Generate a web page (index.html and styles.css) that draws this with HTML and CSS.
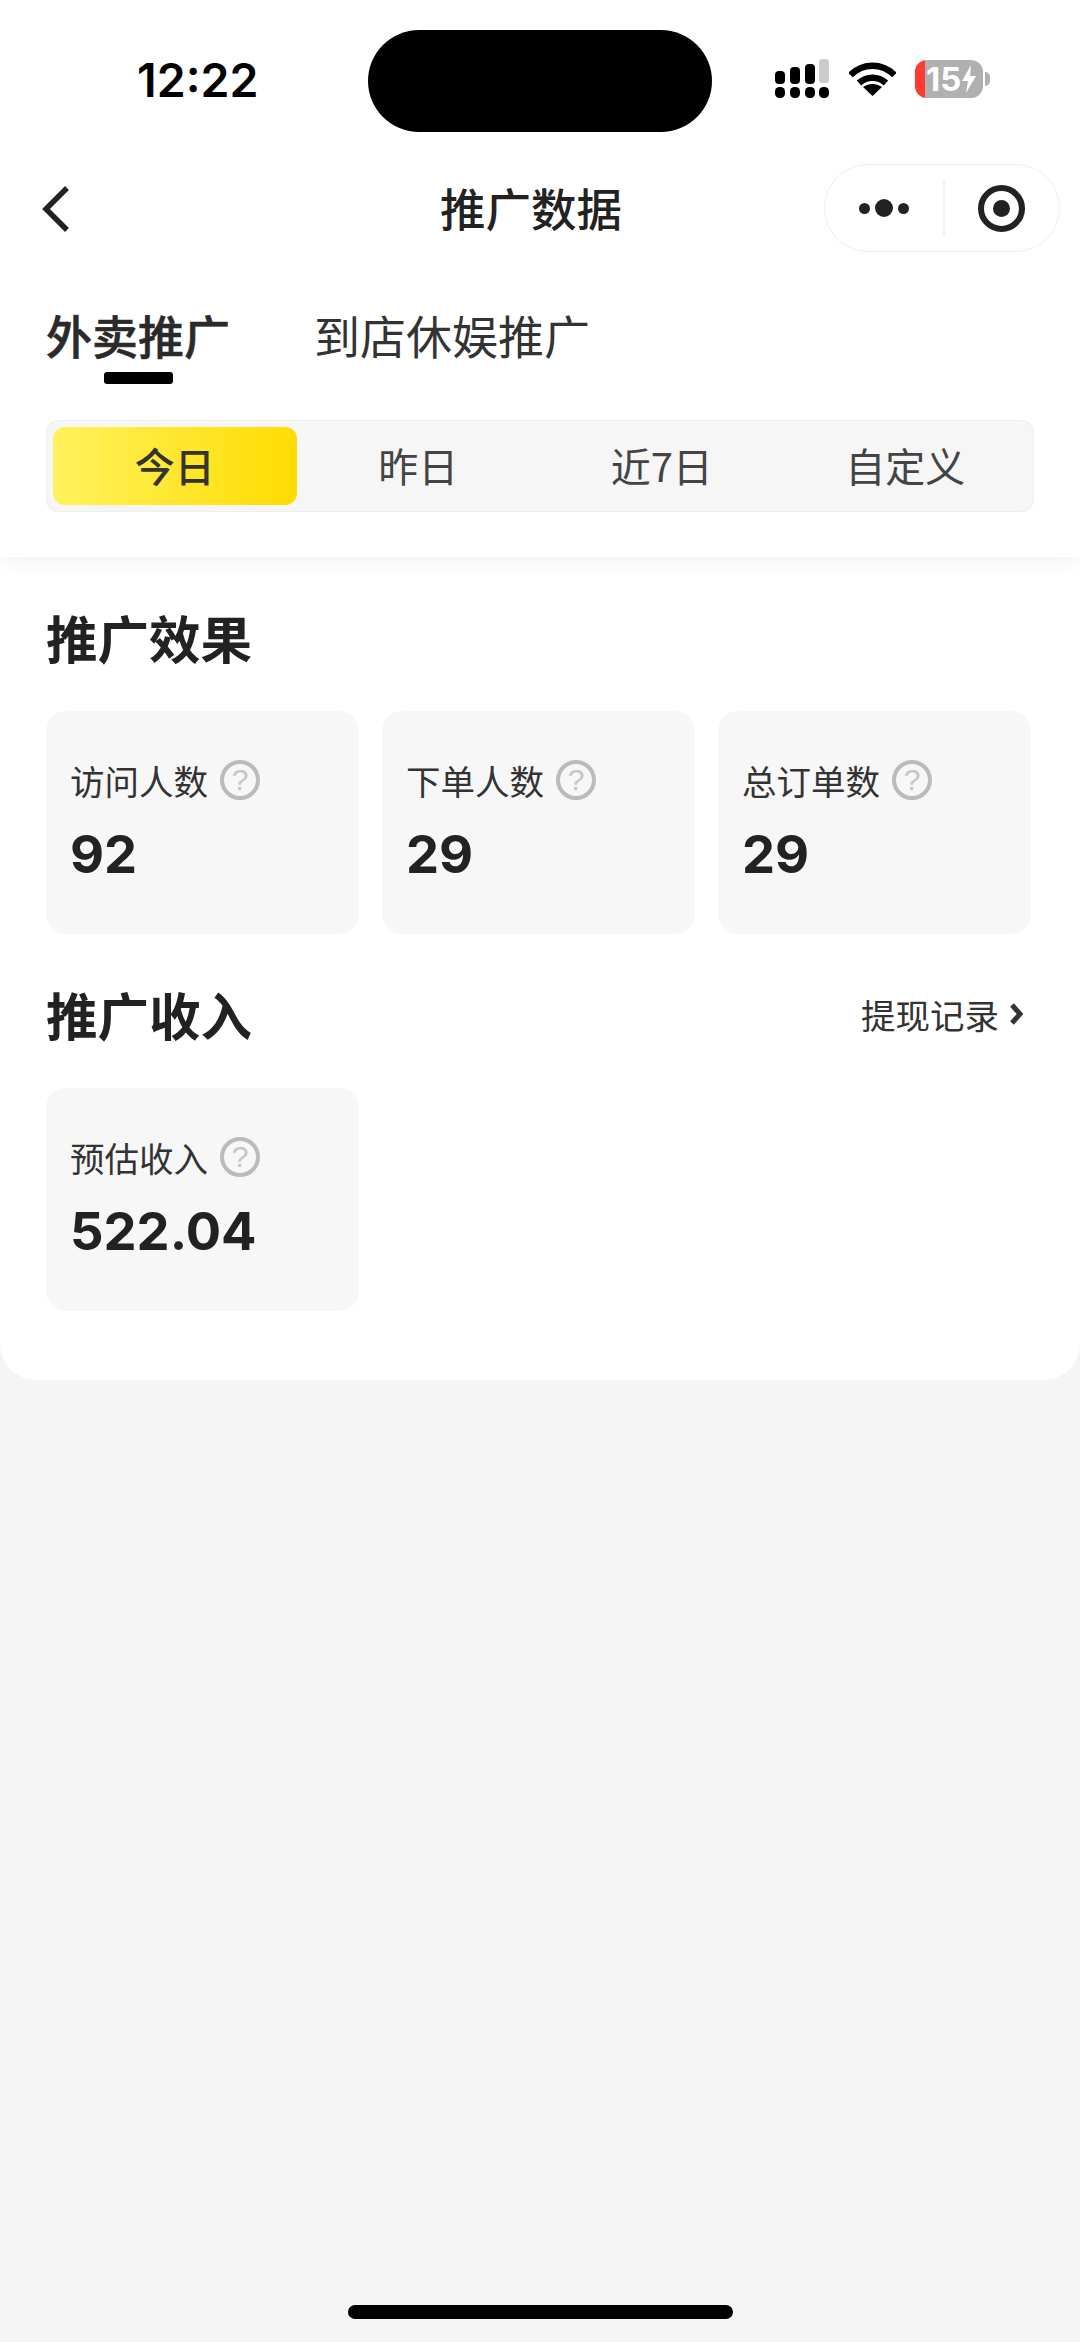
FILE: index.html
```html
<!DOCTYPE html>
<html lang="zh-CN">
<head>
    <meta charset="UTF-8">
    <meta name="viewport" content="width=device-width, initial-scale=1.0">
    <title>推广数据</title>
    <link rel="stylesheet" href="styles.css">
</head>
<body>

<div class="page">
    <div class="header">
        <!-- Status bar -->
        <div class="status-bar">
            <div class="time">12:22</div>
            <div class="island"></div>
            <div class="status-icons">
                <svg class="signal" width="54" height="40" viewBox="0 0 54 40">
                    <rect x="0" y="12" width="10" height="13" rx="4" fill="#000"/>
                    <rect x="15" y="8" width="10" height="17" rx="4" fill="#000"/>
                    <rect x="30" y="5" width="10" height="20" rx="4" fill="#000"/>
                    <rect x="44" y="0" width="10" height="24" rx="3" fill="#ccc"/>
                    <rect x="0" y="28" width="10" height="11" rx="4.5" fill="#000"/>
                    <rect x="15" y="28" width="10" height="11" rx="4.5" fill="#000"/>
                    <rect x="30" y="28" width="10" height="11" rx="4.5" fill="#000"/>
                    <rect x="44" y="28" width="10" height="11" rx="4.5" fill="#000"/>
                </svg>
                <svg class="wifi" width="47" height="36" viewBox="0 0 47 36">
                    <path d="M1.5 14 C14 1.500 33 1.500 45.500 14" fill="none" stroke="#000" stroke-width="6.5"/>
                    <path d="M10 22 C18 15 29 15 37 22" fill="none" stroke="#000" stroke-width="6.5"/>
                    <path d="M23.500 35 L14 26 C20 22 27 22 33 26 Z" fill="#000"/>
                </svg>
                <div class="battery">
                    <div class="battery-body">
                        <span class="battery-red"></span>
                        <span class="battery-num">15</span>
                        <svg width="14" height="28" viewBox="0 0 14 28">
                            <path d="M9 0 L0 16 H6 L4 28 L14 11 H8 Z" fill="#fff"/>
                        </svg>
                    </div>
                    <span class="battery-nub"></span>
                </div>
            </div>
        </div>

        <!-- Nav bar -->
        <div class="nav">
            <svg class="back" width="28" height="48" viewBox="0 0 28 48">
                <path d="M25 3 L4 24 L25 45" fill="none" stroke="#222" stroke-width="5.5"/>
            </svg>
            <div class="nav-title">推广数据</div>
            <div class="capsule">
                <div class="capsule-btn">
                    <span class="dot"></span>
                    <span class="dot dot-big"></span>
                    <span class="dot"></span>
                </div>
                <div class="capsule-btn capsule-right">
                    <span class="target"></span>
                </div>
            </div>
        </div>

        <!-- Tabs -->
        <div class="tabs">
            <div class="tab tab-active">外卖推广</div>
            <div class="tab">到店休娱推广</div>
        </div>

        <div class="ranges">
            <div class="range range-active">今日</div>
            <div class="range">昨日</div>
            <div class="range">近7日</div>
            <div class="range">自定义</div>
        </div>
    </div>

    <div class="content">
        <div class="section-head">
            <div class="section-title">推广效果</div>
        </div>
        <div class="cards">
            <div class="card">
                <div class="card-label">访问人数<span class="help">?</span></div>
                <div class="card-value">92</div>
            </div>
            <div class="card">
                <div class="card-label">下单人数<span class="help">?</span></div>
                <div class="card-value">29</div>
            </div>
            <div class="card">
                <div class="card-label">总订单数<span class="help">?</span></div>
                <div class="card-value">29</div>
            </div>
        </div>

        <div class="section-head">
            <div class="section-title">推广收入</div>
            <div class="section-link">提现记录
                <svg width="15" height="24" viewBox="0 0 15 24">
                    <path d="M3 3 L11 12 L3 21" fill="none" stroke="#333" stroke-width="5"/>
                </svg>
            </div>
        </div>
        <div class="cards">
            <div class="card">
                <div class="card-label">预估收入<span class="help">?</span></div>
                <div class="card-value">522.04</div>
            </div>
        </div>
    </div>

    <div class="home-bar"></div>
</div>

</body>
</html>
```

FILE: styles.css
```css
* {
    box-sizing: border-box;
}
body {
    margin: 0;
    background-color: #f5f5f5;
    font-family: "Noto Sans CJK SC", "Noto Sans", sans-serif;
    color: #222;
}
.page {
    width: 1080px;
    height: 2342px;
    display: flex;
    flex-direction: column;
    overflow: hidden;
}
.header {
    height: 557px;
    background-color: #fff;
    box-shadow: 0 6px 20px rgba(0, 0, 0, 0.05);
    position: relative; /* keeps the shadow above the content */
    z-index: 1;
}

/* Status bar */
.status-bar {
    height: 132px;
    padding-top: 30px;
    display: flex;
    align-items: flex-start;
}
.time {
    width: 368px;
    padding: 22px 0 0 137px;
    font-family: Inter, sans-serif;
    font-size: 46.5px;
    line-height: 57px;
    font-weight: 600;
    color: #000;
}
.island {
    width: 344px;
    height: 102px;
    border-radius: 51px;
    background-color: #000;
}
.status-icons {
    display: flex;
    align-items: center;
    padding: 29px 0 0 63px;
}
.wifi {
    margin-left: 20px;
}
.battery {
    display: flex;
    align-items: center;
    margin-left: 19px;
}
.battery-body {
    width: 68px;
    height: 38px;
    border-radius: 12px;
    background-color: #b0b0b0;
    display: flex;
    align-items: center;
    overflow: hidden;
    gap: 1px;
}
.battery-red {
    width: 10px;
    height: 38px;
    background-color: #ff3b30;
}
.battery-num {
    font-family: Inter, sans-serif;
    font-size: 33px;
    line-height: 38px;
    font-weight: 700;
    color: #fff;
}
.battery-nub {
    width: 5px;
    height: 14px;
    margin-left: 2px;
    border-radius: 0 5px 5px 0;
    background-color: #b0b0b0;
}

/* Nav bar */
.nav {
    height: 124px;
    padding-top: 32px;
    display: flex;
    align-items: flex-start;
}
.back {
    margin: 21px 0 0 42px;
}
.nav-title {
    width: 180px;
    margin: 13px 0 0 370px;
    font-size: 45.5px;
    line-height: 60px;
    font-weight: 500;
    white-space: nowrap;
}
.capsule {
    width: 236px;
    height: 88px;
    margin-left: 204px;
    border: 1px solid #eee;
    border-radius: 44px;
    display: flex;
    align-items: center;
}
.capsule-btn {
    width: 118px;
    height: 56px;
    display: flex;
    align-items: center;
    justify-content: center;
    gap: 3px;
}
.capsule-right {
    width: 117px;
    border-left: 2px solid #f2f2f2;
}
.dot {
    width: 11px;
    height: 11px;
    margin: 0 1px;
    border-radius: 50%;
    background-color: #222;
}
.dot-big {
    width: 18px;
    height: 18px;
}
.target {
    width: 47px;
    height: 47px;
    border: 6px solid #222;
    border-radius: 50%;
    display: flex;
    align-items: center;
    justify-content: center;
}
.target::after {
    content: "";
    width: 17px;
    height: 17px;
    border-radius: 50%;
    background-color: #222;
}

/* Tabs */
.tabs {
    height: 164px;
    padding: 45px 0 0 46px;
    display: flex;
    gap: 84px;
}
.tab {
    position: relative;
    height: 66px;
    font-size: 46px;
    line-height: 66px;
    color: #333;
    white-space: nowrap;
}
.tab-active {
    font-weight: 500;
    -webkit-text-stroke: 0.6px #2a2a2a;
    color: #2a2a2a;
}
.tab-active::after {
    content: "";
    position: absolute;
    left: 58px;
    top: 71px;
    width: 69px;
    height: 12px;
    border-radius: 3px;
    background-color: #000;
}
.ranges {
    width: 988px;
    height: 92px;
    margin-left: 46px;
    padding: 6px;
    background-color: #f6f6f6;
    border: 1px solid #eee;
    border-radius: 12px;
    display: flex;
}
.range {
    flex: 1;
    padding-bottom: 2px;
    display: flex;
    align-items: center;
    justify-content: center;
    font-size: 40px;
    color: #444;
    border-radius: 12px;
}
.range-active {
    font-weight: 500;
    color: #333;
    background: linear-gradient(90deg, #fff25e, #ffdc00);
}

/* Content */
.content {
    height: 823px;
    padding: 0 46px;
    background-color: #fff;
    border-radius: 0 0 36px 36px;
}
.section-head {
    height: 154px;
    padding-top: 6px;
    display: flex;
    align-items: center;
    justify-content: space-between;
}
.section-title {
    font-size: 51.5px;
    font-weight: 700;
    line-height: 70px;
}
.section-link {
    display: flex;
    align-items: center;
    gap: 10px;
    padding-right: 10px;
    font-size: 34.5px;
    color: #333;
}
.cards {
    display: flex;
    gap: 23px;
}
.card {
    width: 313px;
    height: 223px;
    padding: 45px 0 0 24px;
    background-color: #f7f7f7;
    border-radius: 20px;
}
.card-label {
    display: flex;
    align-items: center;
    height: 48px;
    font-size: 34.5px;
    color: #333;
}
.help {
    width: 40px;
    height: 40px;
    margin-left: 12px;
    border: 4px solid #bbb;
    border-radius: 50%;
    display: flex;
    align-items: center;
    justify-content: center;
    font-family: "Liberation Sans", sans-serif;
    font-size: 30px;
    color: #c4c4c4;
}
.card-value {
    margin-top: 17px;
    font-family: Inter, sans-serif;
    font-size: 52.5px;
    line-height: 66px;
    font-weight: 700;
    color: #222;
}

.home-bar {
    width: 385px;
    height: 14px;
    margin: 925px 0 0 348px;
    border-radius: 7px;
    background-color: #000;
}
```
